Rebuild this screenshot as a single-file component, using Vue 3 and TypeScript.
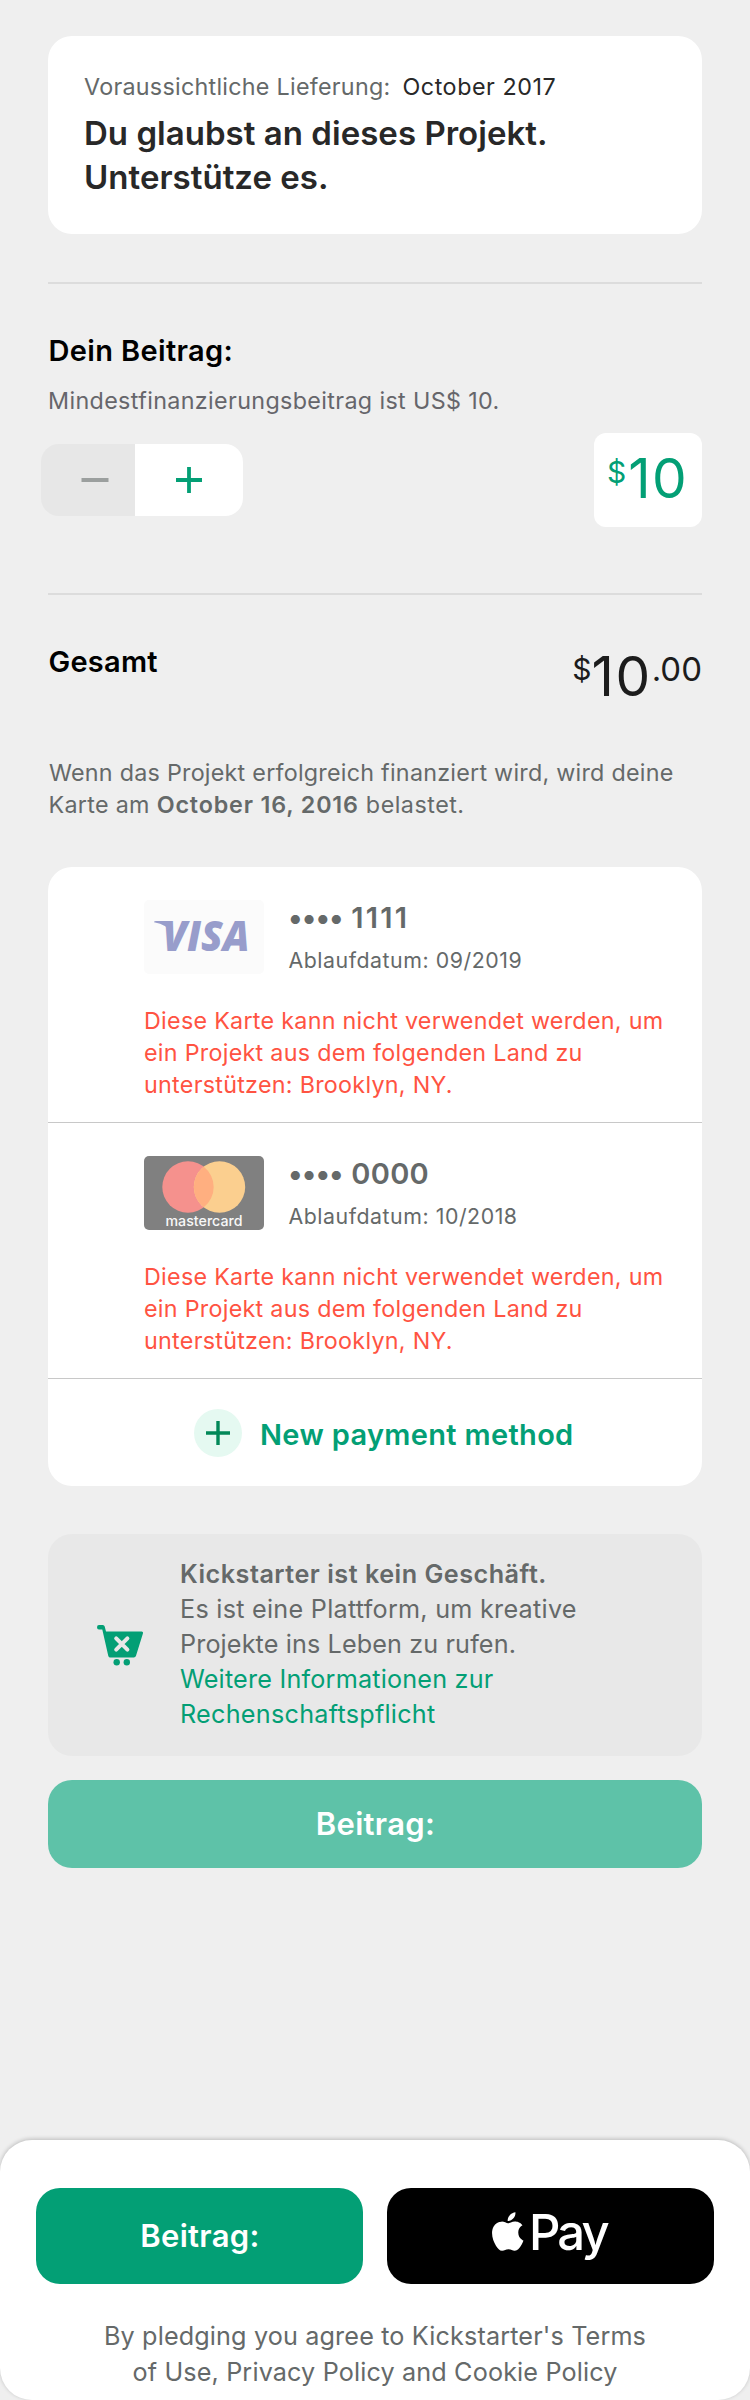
<script setup lang="ts">
interface Card {
  brand: 'visa' | 'mastercard'
  digits: string
  expiry: string
}

const cards: Card[] = [
  { brand: 'visa', digits: '1111', expiry: '09/2019' },
  { brand: 'mastercard', digits: '0000', expiry: '10/2018' },
]

const warning: string[] = [
  'Diese Karte kann nicht verwendet werden, um',
  'ein Projekt aus dem folgenden Land zu',
  'unterstützen: Brooklyn, NY.',
]
</script>

<template>
  <div class="page">
    <main class="content">
      <section class="reward">
        <p class="delivery">
          <span class="delivery-label">Voraussichtliche Lieferung:</span>
          <span class="delivery-date">October 2017</span>
        </p>
        <h1>Du glaubst an dieses Projekt.<br />Unterstütze es.</h1>
      </section>

      <hr class="rule" />

      <section class="pledge">
        <h2>Dein Beitrag:</h2>
        <p class="minimum">Mindestfinanzierungsbeitrag ist US$ 10.</p>
        <div class="pledge-row">
          <div class="stepper">
            <button class="step minus" disabled aria-label="Weniger">
              <svg width="28" height="28" viewBox="0 0 28 28"><path d="M.5 14h27" /></svg>
            </button>
            <button class="step plus" aria-label="Mehr">
              <svg width="28" height="28" viewBox="0 0 28 28"><path d="M1 14h26M14 1v26" /></svg>
            </button>
          </div>
          <div class="amount">
            <span class="currency">$</span><span class="whole">10</span>
          </div>
        </div>
      </section>

      <hr class="rule second" />

      <section class="total">
        <h2>Gesamt</h2>
        <div class="total-value">
          <span class="currency">$</span><span class="whole">10</span><span class="cents">.00</span>
        </div>
      </section>

      <p class="charge">
        <span class="charge-line">Wenn das Projekt erfolgreich finanziert wird, wird deine</span><br />
        <span class="charge-start">Karte am </span><b>October 16, 2016</b><span class="charge-end"> belastet.</span>
      </p>

      <section class="methods">
        <article v-for="card in cards" :key="card.digits" class="card">
          <div class="card-head">
            <svg v-if="card.brand === 'visa'" class="brand" width="120" height="74" viewBox="0 0 120 74">
              <rect width="120" height="74" rx="5" fill="#fbfbfb" />
              <path d="M10 22.2Q10 21 12 21H25L29 33.5Q23 24.5 10 22.2Z" fill="#989dcb" />
              <text class="visa-mark" x="18.5" y="51.3" textLength="87" lengthAdjust="spacingAndGlyphs">VISA</text>
            </svg>
            <svg v-else class="brand" width="120" height="74" viewBox="0 0 120 74">
              <rect width="120" height="74" rx="5" fill="#808080" />
              <circle cx="44" cy="31" r="25.7" fill="#f5918d" />
              <circle cx="75.5" cy="31" r="25.7" fill="#fbcf8f" />
              <path d="M59.75 10.7a25.7 25.7 0 0 1 0 40.6a25.7 25.7 0 0 1 0-40.6Z" fill="#ffaf80" />
              <text class="mc-mark" x="21.5" y="69.7" textLength="77">mastercard</text>
            </svg>
            <div class="card-info">
              <p class="number">
                <span class="dots">••••</span>
                <span class="digits" :class="card.brand">{{ card.digits }}</span>
              </p>
              <p class="expiry">Ablaufdatum: {{ card.expiry }}</p>
            </div>
          </div>
          <p class="warning"><span v-for="line in warning" :key="line">{{ line }}</span></p>
        </article>
        <button class="add">
          <svg width="48" height="48" viewBox="0 0 48 48">
            <circle cx="24" cy="24" r="24" fill="#e5f9f1" />
            <path d="M12 24h24M24 12v24" stroke="#028858" stroke-width="3.4" />
          </svg>
          <span>New payment method</span>
        </button>
      </section>

      <section class="notice">
        <svg class="cart" width="47" height="41" viewBox="0 0 47 41">
          <path
            d="M2 0H5.8Q7.3 0 7.7 1.6L9 6.5H44.6Q46.5 6.5 46 8.3L39 30.8Q38.5 32.5 36.8 32.5H13.4Q11.8 32.5 11.3 30.9L5.3 4.6H2Q0 4.6 0 2.3Q0 0 2 0Z"
            fill="#039f75"
          />
          <circle cx="19.7" cy="37.2" r="3.2" fill="#039f75" />
          <circle cx="29.8" cy="37.2" r="3.2" fill="#039f75" />
          <path d="M19.2 13.3L30.4 24.6M30.4 13.3L19.2 24.6" stroke="#e8e8e8" stroke-width="4" stroke-linecap="round" />
        </svg>
        <p>
          <b>Kickstarter ist kein Geschäft.</b><br />
          Es ist eine Plattform, um kreative<br />
          <span class="tight">Projekte ins Leben zu rufen.</span><br />
          <a><span class="snug">Weitere Informationen zur</span><br />Rechenschaftspflicht</a>
        </p>
      </section>

      <button class="submit">Beitrag:</button>
    </main>

    <footer class="sheet">
      <div class="sheet-buttons">
        <button class="sheet-pledge">Beitrag:</button>
        <button class="apple-pay">
          <svg width="31.5" height="39" viewBox="2.2 0 19.6 24">
            <path
              fill="#fff"
              d="M12.152 6.896c-.948 0-2.415-1.078-3.96-1.04-2.04.027-3.91 1.183-4.961 3.014-2.117 3.675-.546 9.103 1.519 12.09 1.013 1.454 2.208 3.09 3.792 3.039 1.52-.065 2.09-.987 3.935-.987 1.831 0 2.35.987 3.96.948 1.637-.026 2.676-1.48 3.676-2.948 1.156-1.688 1.636-3.325 1.662-3.415-.039-.013-3.182-1.221-3.22-4.857-.026-3.04 2.48-4.494 2.597-4.559-1.429-2.09-3.623-2.324-4.39-2.376-2-.156-3.675 1.09-4.61 1.09zM15.53 3.83c.843-1.012 1.4-2.427 1.245-3.83-1.207.052-2.662.805-3.532 1.818-.78.896-1.454 2.338-1.273 3.714 1.338.104 2.715-.688 3.559-1.701"
            />
          </svg>
          <span>Pay</span>
        </button>
      </div>
      <p class="terms">By pledging you agree to Kickstarter's Terms<br />of Use, Privacy Policy and Cookie Policy</p>
    </footer>
  </div>
</template>

<style>
body {
  background: #efefef;
}
</style>

<style scoped>
.page {
  box-sizing: border-box;
  width: 750px;
  height: 2400px;
  display: flex;
  flex-direction: column;
  justify-content: space-between;
  overflow: hidden;
  background: #efefef;
  color: #656969;
  font-family: Inter, "Liberation Sans", sans-serif;
  font-size: 23.3px;
  white-space: nowrap;
}

h1,
h2,
p {
  margin: 0;
}

button {
  margin: 0;
  padding: 0;
  border: 0;
  font: inherit;
  color: inherit;
  background: none;
}

svg {
  display: block;
  flex: none;
}

.content {
  padding: 36px 48px 0;
}

.reward {
  box-sizing: border-box;
  height: 198px;
  padding: 34px 36px 0;
  border-radius: 24px;
  background: #fff;
}

.delivery {
  display: flex;
  gap: 12px;
  line-height: 33px;
}

.delivery-label {
  letter-spacing: 0.27px;
}

.delivery-date {
  letter-spacing: 0.55px;
  color: #282828;
}

h1 {
  margin: 8px 0 0;
  font-size: 33px;
  font-weight: 600;
  line-height: 44px;
  letter-spacing: 0.03px;
  color: #282828;
}

.rule {
  height: 2px;
  margin: 48px 0 49px;
  border: 0;
  background: #dcdcdc;
}

.rule.second {
  margin-top: 66px;
}

h2 {
  margin-left: 0.5px;
  font-size: 29px;
  font-weight: 600;
  line-height: 35px;
  letter-spacing: 0.35px;
  color: #000;
}

.minimum {
  margin: 16px 0 0;
  line-height: 33px;
  letter-spacing: 0.36px;
  color: #66666b;
}

.pledge-row {
  display: flex;
  align-items: center;
  justify-content: space-between;
  height: 94px;
  margin-top: 16px;
}

.stepper {
  display: flex;
  height: 72px;
  margin-left: -7px;
  border-radius: 18px;
  overflow: hidden;
}

.step {
  display: flex;
  align-items: center;
  justify-content: center;
}

.step path {
  fill: none;
  stroke-width: 3.8;
}

.minus {
  width: 94px;
  padding-left: 13px;
  background: #e7e7e7;
}

.minus path {
  stroke: #9b9f9e;
}

.plus {
  width: 108px;
  background: #fff;
}

.plus path {
  stroke: #039f75;
}

.amount {
  box-sizing: border-box;
  display: flex;
  align-items: flex-start;
  gap: 2px;
  width: 108px;
  height: 94px;
  padding: 12px 0 0 13px;
  border-radius: 12px;
  background: #fff;
  color: #039f75;
}

.currency {
  font-size: 30px;
  line-height: 36px;
  margin-top: 9px;
}

.whole {
  font-size: 55px;
  line-height: 66px;
  letter-spacing: 1.5px;
}

.total {
  display: flex;
  align-items: flex-start;
  justify-content: space-between;
  height: 64px;
}

.total h2 {
  letter-spacing: 0.25px;
}

.total-value {
  display: flex;
  align-items: flex-start;
  margin-top: -1px;
  color: #1c1c1c;
}

.total-value .currency {
  margin-top: 8px;
}

.cents {
  margin-top: 6px;
  font-size: 33px;
  line-height: 40px;
}

.charge {
  margin: 48.5px 0 0 1px;
  line-height: 32px;
}

.charge span {
  white-space: pre;
}

.charge b {
  font-weight: 600;
  letter-spacing: 0.85px;
}

.charge-line {
  letter-spacing: 0.25px;
}

.charge-start {
  letter-spacing: 0.3px;
  margin-left: -0.5px;
}

.charge-end {
  letter-spacing: 0.5px;
}

.methods {
  box-sizing: border-box;
  height: 619px;
  margin-top: 46.5px;
  border-radius: 24px;
  background: #fff;
}

.card {
  box-sizing: border-box;
  height: 256px;
  padding: 33px 0 0 96px;
  border-bottom: 1px solid #c8c8c8;
}

.card-head {
  display: flex;
  gap: 24px;
  height: 74px;
}

.visa-mark {
  font-family: "Open Sans", "Noto Sans", sans-serif;
  font-size: 42px;
  font-weight: 800;
  font-style: italic;
  fill: #989dcb;
}

.mc-mark {
  font-family: Inter, sans-serif;
  font-size: 14.2px;
  font-weight: 500;
  fill: #f8f8f8;
}

.number {
  display: flex;
  gap: 9px;
  font-size: 29px;
  font-weight: 600;
  line-height: 35px;
}

.dots {
  letter-spacing: -0.9px;
}

.digits {
  margin-left: -0.5px;
  letter-spacing: 0.3px;
}

.digits.visa {
  letter-spacing: 2.2px;
}

.expiry {
  margin: 12px 0 0 0.5px;
  font-size: 21.3px;
  line-height: 26px;
  letter-spacing: 0.55px;
}

.warning {
  display: flex;
  flex-direction: column;
  margin: 30.5px 0 0;
  line-height: 32px;
  letter-spacing: 0.28px;
  color: #ff5342;
}

.add {
  display: flex;
  gap: 18px;
  height: 107px;
  padding: 30px 0 0 146px;
}

.add span {
  margin-top: 8px;
  font-size: 29px;
  font-weight: 600;
  line-height: 35px;
  letter-spacing: 0.33px;
  color: #039f75;
}

.notice {
  box-sizing: border-box;
  display: flex;
  gap: 36px;
  height: 222px;
  margin-top: 48px;
  padding: 22.5px 0 0 49px;
  border-radius: 24px;
  background: #e8e8e8;
}

.cart {
  margin-top: 68px;
}

.notice p {
  font-size: 25.2px;
  line-height: 35px;
  letter-spacing: 0.26px;
}

.notice b {
  font-weight: 600;
  letter-spacing: 0.5px;
}

.notice a {
  color: #039f75;
}

.tight {
  letter-spacing: 0.12px;
}

.snug {
  letter-spacing: 0.2px;
}

.submit,
.sheet-pledge {
  padding: 0 0 2px 1px;
  font-size: 31px;
  font-weight: 600;
  line-height: 37px;
  letter-spacing: 0.3px;
  color: #fff;
}

.submit {
  display: block;
  width: 654px;
  height: 88px;
  margin-top: 24px;
  border-radius: 24px;
  background: #5ec2a8;
}

.sheet {
  box-sizing: border-box;
  height: 260px;
  padding: 48px 36px 0;
  border-radius: 32px;
  background: #fff;
  box-shadow: 0 -1px 4px rgba(0, 0, 0, 0.22);
}

.sheet-buttons {
  display: grid;
  grid-template-columns: 1fr 1fr;
  gap: 24px;
  height: 96px;
}

.sheet-pledge {
  border-radius: 24px;
  background: #039f75;
}

.apple-pay {
  display: flex;
  gap: 5.5px;
  padding: 24px 0 0 105px;
  border-radius: 24px;
  background: #000;
  color: #fff;
}

.apple-pay span {
  margin-top: -9px;
  font-size: 49px;
  font-weight: 500;
  line-height: 59px;
  letter-spacing: -2.9px;
}

.terms {
  margin-top: 34px;
  font-size: 25.2px;
  line-height: 36px;
  letter-spacing: 0.14px;
  text-align: center;
}
</style>
